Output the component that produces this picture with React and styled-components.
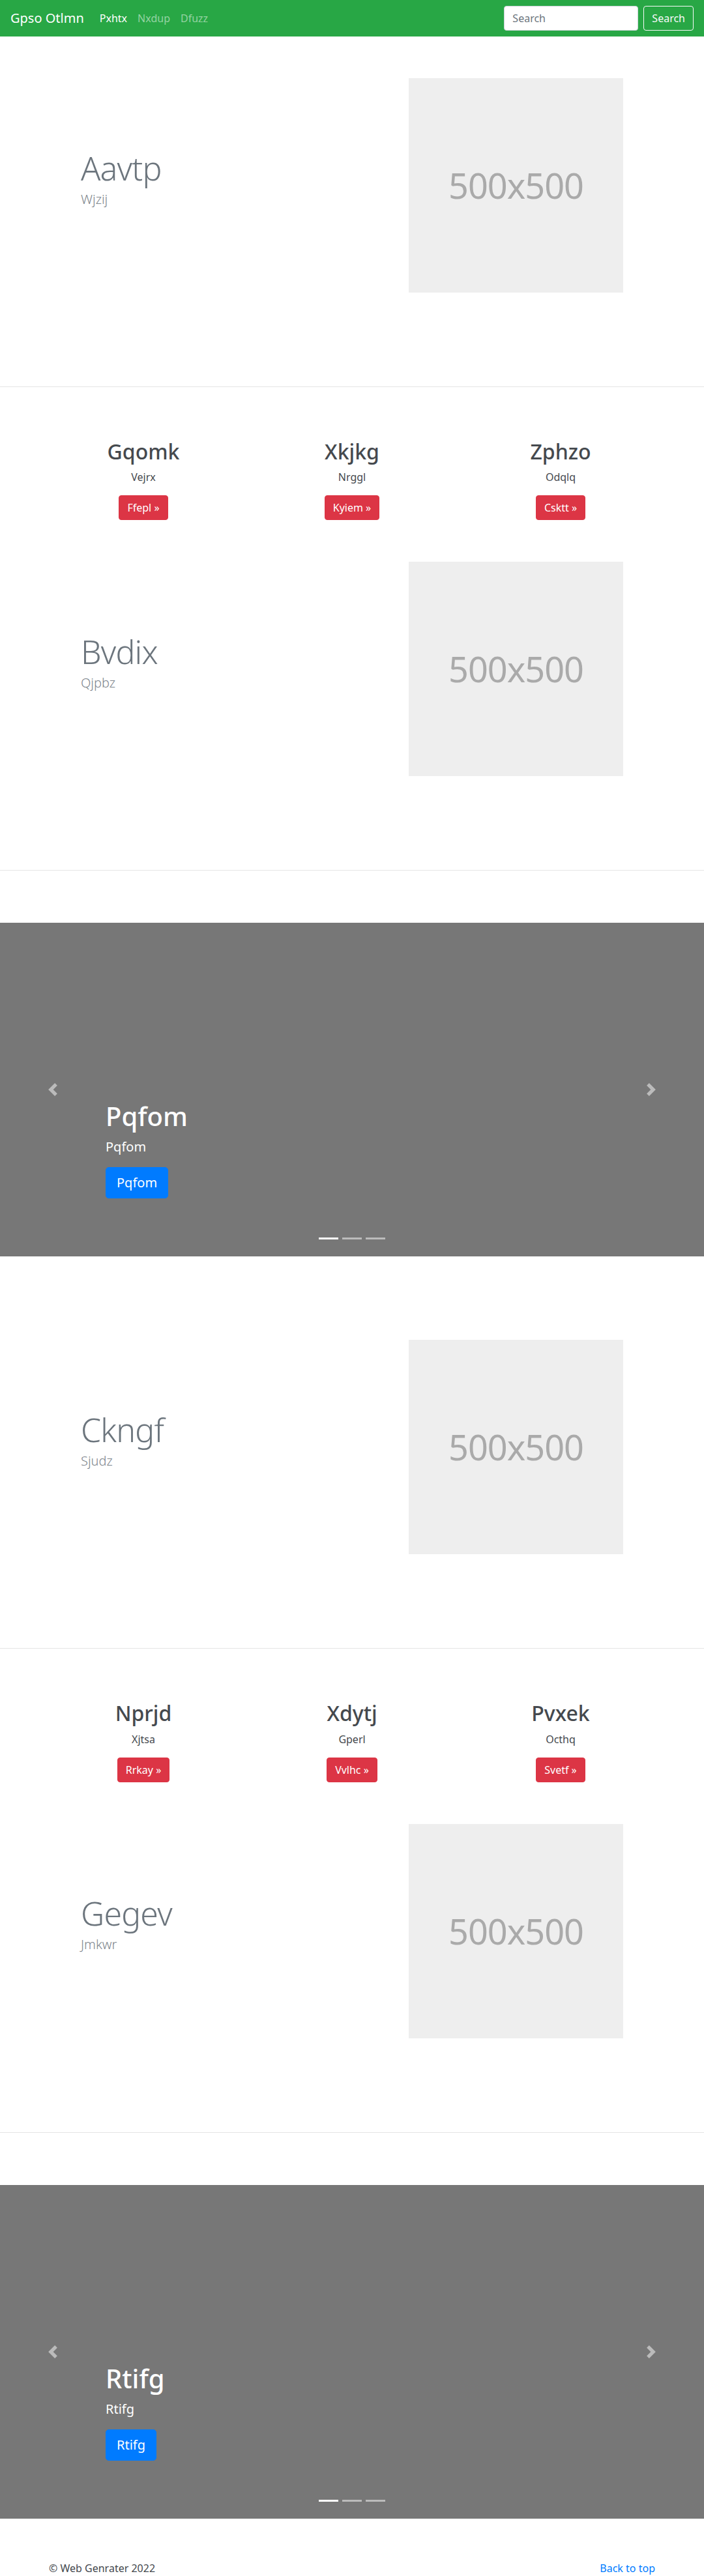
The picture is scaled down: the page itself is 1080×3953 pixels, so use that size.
import React from 'react';
import styled, { createGlobalStyle } from 'styled-components';

const GlobalStyle = createGlobalStyle`
  html, body {
    margin: 0;
    padding: 0;
    background: #fff;
  }
  body {
    font-family: "Noto Sans", "Open Sans", "DejaVu Sans", sans-serif;
    font-size: 16px;
    line-height: 1.5;
    color: #212529;
  }
  * {
    box-sizing: border-box;
  }
`

const Navbar = styled.nav`
  height: 56px;
  background-color: #28a745;
  display: flex;
  align-items: center;
  padding: 0 16px;
`

const Brand = styled.a`
  font-size: 20px;
  line-height: 30px;
  color: #fff;
  margin-right: 16px;
  text-decoration: none;
  white-space: nowrap;
`

const NavList = styled.ul`
  display: flex;
  flex: 1;
  list-style: none;
  margin: 0;
  padding: 0;
`

const NavLink = styled.a`
  display: block;
  padding: 8px;
  color: ${p => (p.$active ? '#fff' : 'rgba(255, 255, 255, 0.5)')};
  text-decoration: none;
`

const SearchForm = styled.form`
  display: flex;
  align-items: center;
  gap: 8px;
`

const SearchInput = styled.input`
  width: 206px;
  height: 38px;
  padding: 6px 12px;
  font-family: inherit;
  font-size: 16px;
  color: #495057;
  background: #fff;
  border: 1px solid #ced4da;
  border-radius: 4px;
  outline: none;

  &::placeholder {
    color: #6c757d;
  }
`

const SearchButton = styled.button`
  height: 38px;
  padding: 6px 12px;
  font-family: inherit;
  font-size: 16px;
  line-height: 24px;
  color: #f8f9fa;
  background: transparent;
  border: 1px solid #f8f9fa;
  border-radius: 4px;
`

const Featurette = styled.section`
  padding: 64px 0;
`

const FeaturetteRow = styled.div`
  width: 960px;
  margin: 0 auto;
  padding: 0 64px;
  display: flex;
  align-items: center;
  justify-content: space-between;
`

const FeaturetteHeading = styled.h2`
  margin: 0 0 8px;
  font-size: 50px;
  font-weight: 300;
  line-height: 1;
  letter-spacing: -0.05rem;
  color: #6c757d;
`

const FeaturetteLead = styled.p`
  margin: 0 0 16px;
  font-size: 20px;
  font-weight: 300;
  line-height: 1.5;
  color: #7d858c;
`

const Placeholder = styled.div`
  width: 329px;
  height: 329px;
  background-color: #eee;
  color: #aaa;
  display: flex;
  align-items: center;
  justify-content: center;
  font-size: 54px;
  letter-spacing: -1px;
`

const Divider = styled.hr`
  margin: 80px 0;
  height: 0;
  border: 0;
  border-top: 1px solid #e5e5e5;
`

const Features = styled.section`
  width: 960px;
  margin: 0 auto;
  display: grid;
  grid-template-columns: repeat(3, 1fr);
  text-align: center;
`

const FeatureTitle = styled.h2`
  margin: 0 0 8px;
  font-size: 32px;
  font-weight: 500;
  line-height: 1.2;
  color: #45494e;
`

const FeatureText = styled.p`
  margin: 0 0 16px;
  color: #45494e;
`

const ButtonRow = styled.p`
  margin: 0;
`

const DangerButton = styled.a`
  display: inline-block;
  padding: 6px 12px;
  font-size: 16px;
  line-height: 24px;
  color: #fff;
  background-color: #dc3545;
  border: 1px solid #dc3545;
  border-radius: 4px;
  text-decoration: none;
`

const Carousel = styled.section`
  position: relative;
  height: 512px;
  margin-bottom: 64px;
  background-color: #777;
  display: flex;
  align-items: flex-end;
`

const Caption = styled.div`
  padding: 0 162px 89px;
  color: #fff;
`

const CaptionTitle = styled.h1`
  margin: 0 0 8px;
  font-size: 40px;
  font-weight: 500;
  line-height: 1.2;
`

const CaptionLead = styled.p`
  margin: 0 0 16px;
  font-size: 20px;
  line-height: 1.5;
`

const PrimaryButton = styled.a`
  display: inline-block;
  padding: 8px 16px;
  font-size: 20px;
  line-height: 30px;
  color: #fff;
  background-color: #007bff;
  border: 1px solid #007bff;
  border-radius: 4.8px;
  text-decoration: none;
`

const Control = styled.a`
  position: absolute;
  top: 0;
  bottom: 0;
  ${p => (p.$side === 'prev' ? 'left: 0;' : 'right: 0;')}
  width: 15%;
  display: flex;
  align-items: center;
  justify-content: center;
  opacity: 0.5;
`

const Indicators = styled.ol`
  position: absolute;
  left: 0;
  right: 0;
  bottom: 26px;
  margin: 0;
  padding: 0;
  list-style: none;
  display: flex;
  justify-content: center;
`

const Indicator = styled.li`
  width: 30px;
  height: 3px;
  margin: 0 3px;
  background-color: #fff;
  opacity: ${p => (p.$active ? 1 : 0.5)};
`

const Footer = styled.footer`
  width: 960px;
  margin: 0 auto;
  padding: 0 15px;
  display: flex;
  justify-content: space-between;
`

const FooterText = styled.p`
  margin: 0 0 16px;
  color: #45494e;
`

const FooterLink = styled.a`
  color: #007bff;
  text-decoration: none;
`

const Chevron = ({ dir }) => (
  <svg width="20" height="20" viewBox="0 0 8 8" fill="#fff">
    {dir === 'prev'
      ? <path d="M5.25 0l-4 4 4 4 1.5-1.5L4.25 4l2.5-2.5L5.25 0z" />
      : <path d="M2.75 0l-1.5 1.5L3.75 4l-2.5 2.5L2.75 8l4-4-4-4z" />}
  </svg>
)

const FeaturetteBlock = ({ title, lead }) => (
  <Featurette>
    <FeaturetteRow>
      <div>
        <FeaturetteHeading>{title}</FeaturetteHeading>
        <FeaturetteLead>{lead}</FeaturetteLead>
      </div>
      <Placeholder>500x500</Placeholder>
    </FeaturetteRow>
  </Featurette>
)

const FeatureRow = ({ items }) => (
  <Features>
    {items.map(item => (
      <div key={item.title}>
        <FeatureTitle>{item.title}</FeatureTitle>
        <FeatureText>{item.text}</FeatureText>
        <ButtonRow>
          <DangerButton href="#">{item.button} &raquo;</DangerButton>
        </ButtonRow>
      </div>
    ))}
  </Features>
)

const Slide = ({ label }) => (
  <Carousel>
    <Caption>
      <CaptionTitle>{label}</CaptionTitle>
      <CaptionLead>{label}</CaptionLead>
      <ButtonRow>
        <PrimaryButton href="#">{label}</PrimaryButton>
      </ButtonRow>
    </Caption>
    <Control $side="prev" href="#"><Chevron dir="prev" /></Control>
    <Control $side="next" href="#"><Chevron dir="next" /></Control>
    <Indicators>
      <Indicator $active />
      <Indicator />
      <Indicator />
    </Indicators>
  </Carousel>
)

const firstFeatures = [
  { title: 'Gqomk', text: 'Vejrx', button: 'Ffepl' },
  { title: 'Xkjkg', text: 'Nrggl', button: 'Kyiem' },
  { title: 'Zphzo', text: 'Odqlq', button: 'Csktt' },
]

const secondFeatures = [
  { title: 'Nprjd', text: 'Xjtsa', button: 'Rrkay' },
  { title: 'Xdytj', text: 'Gperl', button: 'Vvlhc' },
  { title: 'Pvxek', text: 'Octhq', button: 'Svetf' },
]

function App() {
  return (
    <>
      <GlobalStyle />
      <Navbar>
        <Brand href="#">Gpso Otlmn</Brand>
        <NavList>
          <li><NavLink $active href="#">Pxhtx</NavLink></li>
          <li><NavLink href="#">Nxdup</NavLink></li>
          <li><NavLink href="#">Dfuzz</NavLink></li>
        </NavList>
        <SearchForm onSubmit={e => e.preventDefault()}>
          <SearchInput type="text" placeholder="Search" />
          <SearchButton type="submit">Search</SearchButton>
        </SearchForm>
      </Navbar>

      <FeaturetteBlock title="Aavtp" lead="Wjzij" />
      <Divider />
      <FeatureRow items={firstFeatures} />
      <FeaturetteBlock title="Bvdix" lead="Qjpbz" />
      <Divider />
      <Slide label="Pqfom" />

      <FeaturetteBlock title="Ckngf" lead="Sjudz" />
      <Divider />
      <FeatureRow items={secondFeatures} />
      <FeaturetteBlock title="Gegev" lead="Jmkwr" />
      <Divider />
      <Slide label="Rtifg" />

      <Footer>
        <FooterText>&copy; Web Genrater 2022</FooterText>
        <FooterText><FooterLink href="#">Back to top</FooterLink></FooterText>
      </Footer>
    </>
  );
}

export default App;
